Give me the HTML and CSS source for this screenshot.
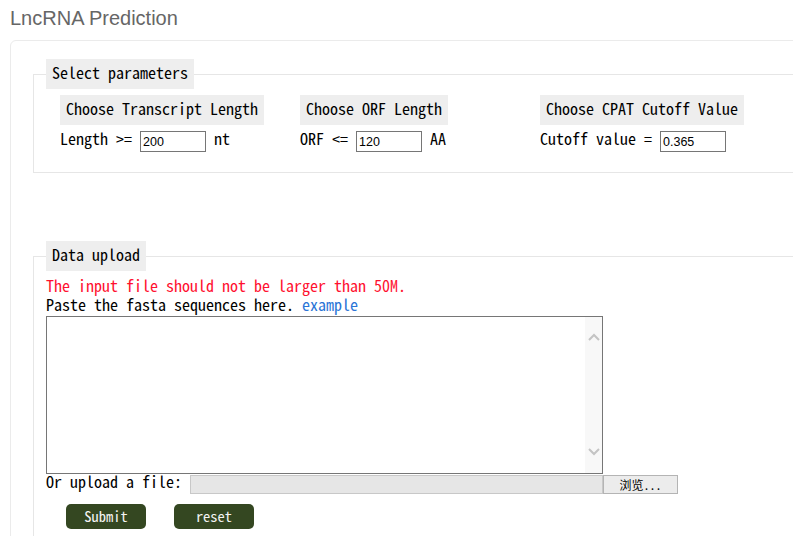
FILE: index.html
```html
<!DOCTYPE html>
<html lang="en">
<head>
<meta charset="utf-8">
<title>LncRNA Prediction</title>
<link rel="stylesheet" href="styles.css">
</head>
<body>
<h1 class="page-title">LncRNA Prediction</h1>
<div class="panel">
  <fieldset class="group params">
    <legend class="group-legend">Select parameters</legend>
    <div class="param-grid">
      <div class="param">
        <div class="param-head">Choose Transcript Length</div>
        <div class="param-line"><span>Length &gt;=</span><input class="num" type="text" value="200"><span>nt</span></div>
      </div>
      <div class="param">
        <div class="param-head">Choose ORF Length</div>
        <div class="param-line"><span>ORF &lt;=</span><input class="num" type="text" value="120"><span>AA</span></div>
      </div>
      <div class="param">
        <div class="param-head">Choose CPAT Cutoff Value</div>
        <div class="param-line"><span>Cutoff value =</span><input class="num" type="text" value="0.365"></div>
      </div>
    </div>
  </fieldset>
  <fieldset class="group upload">
    <legend class="group-legend">Data upload</legend>
    <p class="warn">The input file should not be larger than 50M.</p>
    <p class="hint">Paste the fasta sequences here. <a class="link" href="#">example</a></p>
    <div class="seq-box">
      <textarea class="seq"></textarea>
      <div class="vscroll">
        <svg class="chev" width="12" height="8" viewBox="0 0 12 8"><polyline points="1,7 6,2 11,7" fill="none" stroke="#c4c4c4" stroke-width="2"/></svg>
        <svg class="chev" width="12" height="8" viewBox="0 0 12 8"><polyline points="1,1 6,6 11,1" fill="none" stroke="#c4c4c4" stroke-width="2"/></svg>
      </div>
    </div>
    <div class="file-row">
      <span>Or upload a file:</span>
      <div class="file-input"><div class="file-path"></div><button class="browse" type="button">浏览...</button></div>
    </div>
    <div class="actions">
      <button class="btn" type="button">Submit</button>
      <button class="btn" type="button">reset</button>
    </div>
  </fieldset>
</div>
</body>
</html>
```
FILE: styles.css
```css
html {
  overflow: hidden;
}

body {
  margin: 0;
  background: #fff;
  color: #000;
  font-family: "Noto Sans Mono CJK SC", "Liberation Mono", monospace;
  font-size: 16px;
}

.page-title {
  margin: 6px 0 10px 10px;
  font: 400 20px/24px "Liberation Sans", Arial, sans-serif;
  color: #666;
}

.panel {
  margin-left: 10px;
  width: 820px;
  border: 1px solid #ebebeb;
  border-radius: 6px;
  padding: 0 0 40px 22px;
}

.group {
  margin: 18px 0 0;
  padding: 6px 0 20px 12px;
  border: 1px solid #e6e6e6;
  min-width: 0;
}

.upload {
  margin-top: 68px;
}

.group-legend {
  margin: 0;
  padding: 0 6px 4px;
  background: #eee;
  line-height: 26px;
}

.param-grid {
  display: grid;
  grid-template-columns: repeat(3, 240px);
  padding-left: 14px;
}

.param {
  display: flex;
  flex-direction: column;
  align-items: flex-start;
}

.param-head {
  background: #eee;
  padding: 0 6px 4px;
  line-height: 26px;
}

.param-line {
  margin-top: 6px;
  height: 21px;
  display: flex;
  align-items: flex-start;
  gap: 8px;
  line-height: 15px;
}

.num {
  width: 66px;
  height: 21px;
  box-sizing: border-box;
  margin: 0;
  padding: 0 2px;
  border: 1px solid #767676;
  font: 12.5px "Liberation Sans", Arial, sans-serif;
  color: #000;
}

.warn {
  margin: 2px 0 0;
  padding-bottom: 6px;
  line-height: 13px;
  color: #ff1030;
}

.hint {
  margin: 0;
  padding-bottom: 5px;
  line-height: 13px;
}

.link {
  color: #2a74d6;
  text-decoration: none;
}

.seq-box {
  display: flex;
  width: 557px;
  height: 158px;
  box-sizing: border-box;
  border: 1px solid #767676;
}

.seq {
  flex: 1;
  margin: 0;
  padding: 2px;
  border: 0;
  resize: none;
  outline: none;
}

.vscroll {
  width: 17px;
  box-sizing: border-box;
  padding: 16px 0 17px;
  background: #f8f8f8;
  display: flex;
  flex-direction: column;
  justify-content: space-between;
  align-items: center;
}

.chev {
  display: block;
}

.file-row {
  margin-top: 1px;
  height: 19px;
  display: flex;
  align-items: flex-start;
  gap: 8px;
  line-height: 12px;
}

.file-input {
  display: flex;
}

.file-path {
  width: 413px;
  height: 19px;
  box-sizing: border-box;
  background: #e6e6e6;
  border: 1px solid #c8c8c8;
}

.browse {
  width: 75px;
  height: 19px;
  box-sizing: border-box;
  margin: 0;
  padding: 0;
  border: 1px solid #b4b4b4;
  background: #ececec;
  color: #000;
  font: 12px/17px "Noto Sans Mono CJK SC", "Noto Sans CJK SC", monospace;
}

.actions {
  margin-top: 10px;
  padding-left: 20px;
  display: flex;
  gap: 28px;
}

.btn {
  width: 80px;
  height: 25px;
  margin: 0;
  padding: 0 0 3px;
  border: 0;
  border-radius: 5px;
  background: #344721;
  color: #f4f4f4;
  font: 14.5px "Noto Sans Mono CJK SC", "Liberation Mono", monospace;
}
```
